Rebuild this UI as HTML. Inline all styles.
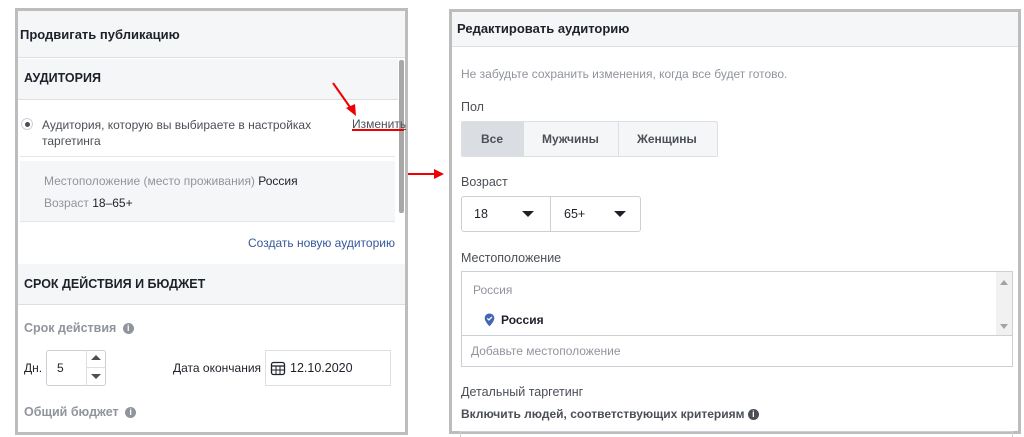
<!DOCTYPE html>
<html><head><meta charset="utf-8"><style>
*{box-sizing:border-box;margin:0;padding:0}
body{width:1024px;height:437px;background:#fff;font-family:"Liberation Sans",Arial,sans-serif;font-size:12px;color:#1d2129;position:relative;overflow:hidden}
.a{position:absolute}
.g{color:#90949c}
.b{font-weight:bold}
</style></head><body>
<!-- left panel -->
<div class="a" style="left:15px;top:8px;width:393px;height:427px;border:3px solid #bdbdbd;background:#fff"></div>
<div class="a" style="left:18px;top:11px;width:387px;height:47px;background:#f5f6f7;border-bottom:1px solid #dddfe2"></div>
<div class="a b" style="left:20px;top:27px;font-size:13px">Продвигать публикацию</div>
<div class="a" style="left:18px;top:59px;width:380px;height:41px;background:#f5f6f7;border-bottom:1px solid #dddfe2"></div>
<div class="a" style="left:24px;top:71px;font-size:12.5px;font-weight:bold">АУДИТОРИЯ</div>
<div class="a" style="left:399px;top:60px;width:5px;height:153px;background:#a8a8a8;border-radius:2px"></div>
<div class="a" style="left:21px;top:118px;width:12px;height:12px;border-radius:50%;border:1px solid #ccd0d5;background:#fff"></div>
<div class="a" style="left:25px;top:122px;width:5px;height:5px;border-radius:50%;background:#4b4f56"></div>
<div class="a" style="left:42px;top:117px;line-height:16px;color:#4b4f56">Аудитория, которую вы выбираете в настройках<br>таргетинга</div>
<div class="a" style="left:352px;top:117px;color:#4b4f56;text-decoration:underline">Изменить</div>
<div class="a" style="left:352px;top:129px;width:52px;height:2px;background:#e00"></div>
<svg class="a" style="left:330px;top:80px" width="32" height="40"><line x1="3" y1="3" x2="22" y2="30" stroke="#e00" stroke-width="2"/><polygon points="26,36 16,28 25,24" fill="#e00"/></svg>
<div class="a" style="left:20px;top:156px;width:375px;height:1px;background:#e5e6e9"></div>
<div class="a" style="left:20px;top:161px;width:375px;height:60px;background:#f5f6f7"></div>
<div class="a" style="left:44px;top:174px"><span class="g">Местоположение (место проживания)</span> Россия</div>
<div class="a" style="left:44px;top:196px"><span class="g">Возраст</span> 18–65+</div>
<div class="a" style="left:20px;top:221px;width:375px;height:1px;background:#e5e6e9"></div>
<div class="a" style="left:248px;top:236px;color:#365899">Создать новую аудиторию</div>
<div class="a" style="left:18px;top:264px;width:387px;height:41px;background:#f5f6f7;border-bottom:1px solid #dddfe2"></div>
<div class="a" style="left:24px;top:277px;font-size:12.5px;font-weight:bold">СРОК ДЕЙСТВИЯ И БЮДЖЕТ</div>
<div class="a b g" style="left:24px;top:321px;font-size:12.5px">Срок действия <span style="display:inline-block;width:11px;height:11px;border-radius:50%;background:#90949c;color:#fff;font-size:9px;text-align:center;line-height:11px;vertical-align:1px;margin-left:3px">i</span></div>
<div class="a" style="left:24px;top:361px">Дн.</div>
<div class="a" style="left:46px;top:350px;width:60px;height:36px;border:1px solid #ccd0d5;border-radius:3px"></div>
<div class="a" style="left:86px;top:350px;width:1px;height:36px;background:#dddfe2"></div>
<div class="a" style="left:86px;top:367px;width:20px;height:1px;background:#dddfe2"></div>
<div class="a" style="left:91px;top:355px;width:0;height:0;border-left:5px solid transparent;border-right:5px solid transparent;border-bottom:5px solid #4b4f56"></div>
<div class="a" style="left:91px;top:374px;width:0;height:0;border-left:5px solid transparent;border-right:5px solid transparent;border-top:5px solid #4b4f56"></div>
<div class="a" style="left:57px;top:361px">5</div>
<div class="a" style="left:173px;top:361px">Дата окончания</div>
<div class="a" style="left:265px;top:350px;width:126px;height:36px;border:1px solid #dddfe2"></div>
<svg class="a" style="left:270px;top:360px" width="16" height="16"><rect x="1.5" y="2.5" width="13" height="12" rx="2" fill="none" stroke="#1d2129" stroke-width="1.3"/><line x1="1.5" y1="6" x2="14.5" y2="6" stroke="#1d2129" stroke-width="1.3"/><line x1="1.5" y1="10" x2="14.5" y2="10" stroke="#1d2129"/><line x1="6" y1="6" x2="6" y2="14.5" stroke="#1d2129"/><line x1="10" y1="6" x2="10" y2="14.5" stroke="#1d2129"/></svg>
<div class="a" style="left:290px;top:361px;font-size:12.5px">12.10.2020</div>
<div class="a b g" style="left:24px;top:405px;font-size:12.5px">Общий бюджет <span style="display:inline-block;width:11px;height:11px;border-radius:50%;background:#90949c;color:#fff;font-size:9px;text-align:center;line-height:11px;vertical-align:1px;margin-left:3px">i</span></div>
<!-- arrow between -->
<div class="a" style="left:408px;top:173px;width:28px;height:2px;background:#e00"></div>
<div class="a" style="left:434px;top:169px;width:0;height:0;border-top:5px solid transparent;border-bottom:5px solid transparent;border-left:10px solid #e00"></div>
<!-- right panel -->
<div class="a" style="left:449px;top:9px;width:572px;height:425px;border:3px solid #bdbdbd;background:#fff"></div>
<div class="a" style="left:452px;top:12px;width:566px;height:35px;background:#f5f6f7;border-bottom:1px solid #dddfe2"></div>
<div class="a b" style="left:457px;top:21px;font-size:13px">Редактировать аудиторию</div>
<div class="a g" style="left:461px;top:67px">Не забудьте сохранить изменения, когда все будет готово.</div>
<div class="a" style="left:461px;top:100px;font-size:12.5px;color:#4b4f56">Пол</div>
<div class="a" style="left:461px;top:121px;width:257px;height:36px;border:1px solid #dddfe2;background:#f5f6f7;border-radius:2px"></div>
<div class="a" style="left:462px;top:122px;width:62px;height:34px;background:#dadde1"></div>
<div class="a" style="left:618px;top:122px;width:1px;height:34px;background:#dddfe2"></div>
<div class="a b" style="left:481px;top:132px;color:#4b4f56">Все</div>
<div class="a b" style="left:542px;top:132px;color:#4b4f56">Мужчины</div>
<div class="a b" style="left:637px;top:132px;color:#4b4f56">Женщины</div>
<div class="a" style="left:461px;top:175px;font-size:12.5px;color:#4b4f56">Возраст</div>
<div class="a" style="left:461px;top:196px;width:180px;height:36px;border:1px solid #ccd0d5;border-radius:3px"></div>
<div class="a" style="left:550px;top:196px;width:1px;height:36px;background:#ccd0d5"></div>
<div class="a" style="left:474px;top:207px;font-size:12.5px">18</div>
<div class="a" style="left:564px;top:207px;font-size:12.5px">65+</div>
<div class="a" style="left:522px;top:211px;border-left:6px solid transparent;border-right:6px solid transparent;border-top:6px solid #1d2129"></div>
<div class="a" style="left:614px;top:211px;border-left:6px solid transparent;border-right:6px solid transparent;border-top:6px solid #1d2129"></div>
<div class="a" style="left:461px;top:251px;font-size:12.5px;color:#4b4f56">Местоположение</div>
<div class="a" style="left:461px;top:271px;width:552px;height:96px;border:1px solid #ccd0d5"></div>
<div class="a" style="left:462px;top:335px;width:550px;height:1px;background:#ccd0d5"></div>
<div class="a" style="left:996px;top:272px;width:16px;height:63px;background:#f1f1f1"></div>
<div class="a" style="left:1000px;top:280px;border-left:4px solid transparent;border-right:4px solid transparent;border-bottom:5px solid #a3a3a3"></div>
<div class="a" style="left:1000px;top:324px;border-left:4px solid transparent;border-right:4px solid transparent;border-top:5px solid #a3a3a3"></div>
<div class="a g" style="left:473px;top:283px">Россия</div>
<svg class="a" style="left:484px;top:313px" width="11" height="14"><path d="M5.5 0.5C2.7 0.5 0.7 2.6 0.7 5.2c0 3.4 4.8 8 4.8 8s4.8-4.6 4.8-8C10.3 2.6 8.3 0.5 5.5 0.5z" fill="#4267b2"/><path d="M3.3 5.3l1.6 1.6 3-3" stroke="#fff" stroke-width="1.3" fill="none"/></svg>
<div class="a b" style="left:501px;top:313px">Россия</div>
<div class="a g" style="left:471px;top:344px">Добавьте местоположение</div>
<div class="a" style="left:461px;top:385px;font-size:12.5px;color:#4b4f56">Детальный таргетинг</div>
<div class="a b" style="left:461px;top:407px;color:#4b4f56">Включить людей, соответствующих критериям <span style="display:inline-block;width:11px;height:11px;border-radius:50%;background:#4b4f56;color:#fff;font-size:9px;text-align:center;line-height:11px;vertical-align:1px">i</span></div>
<div class="a" style="left:460px;top:431px;width:553px;height:6px;border:1px solid #ccd0d5;border-bottom:none"></div>
</body></html>
